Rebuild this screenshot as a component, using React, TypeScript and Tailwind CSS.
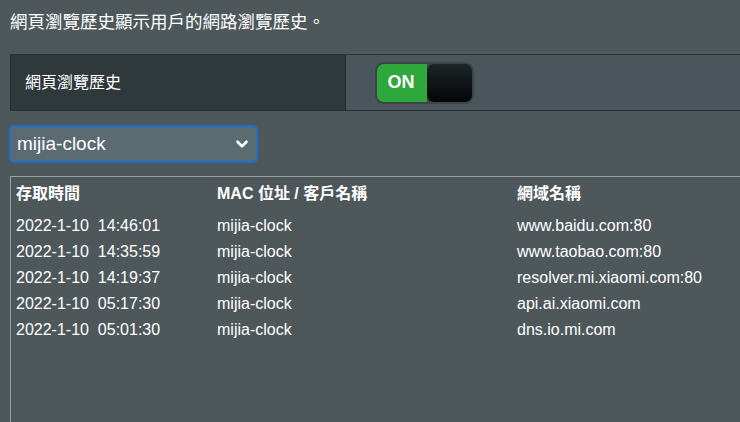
import { ChevronDown } from 'lucide-react'

const rows = [
  { time: '2022-1-10  14:46:01', client: 'mijia-clock', domain: 'www.baidu.com:80' },
  { time: '2022-1-10  14:35:59', client: 'mijia-clock', domain: 'www.taobao.com:80' },
  { time: '2022-1-10  14:19:37', client: 'mijia-clock', domain: 'resolver.mi.xiaomi.com:80' },
  { time: '2022-1-10  05:17:30', client: 'mijia-clock', domain: 'api.ai.xiaomi.com' },
  { time: '2022-1-10  05:01:30', client: 'mijia-clock', domain: 'dns.io.mi.com' },
]

function App() {
  return (
    <div
      className="w-[740px] h-[422px] overflow-hidden bg-[#4e585b] text-white"
      style={{ fontFamily: '"Liberation Sans", Arial, "Noto Sans CJK TC", sans-serif' }}
    >
      {/* Description */}
      <div className="pl-[10px] pt-[10px] h-[54px] text-[17.5px] leading-[24px]">
        網頁瀏覽歷史顯示用戶的網路瀏覽歷史。
      </div>

      {/* Setting row */}
      <div className="ml-[10px] flex h-[57px] border-y border-[#2a3134]">
        <div className="w-[335px] bg-[#2f383b] border-l border-[#262d30] flex items-center pl-[14px] text-[16px]">
          網頁瀏覽歷史
        </div>
        <div className="flex-1 bg-[#4a565b] border-l border-[#262d30] flex items-center pl-[30px]">
          <div className="flex h-[40px] w-[97px] rounded-[8px] bg-[#3a4447] p-[1px] ring-1 ring-[#3d4649]">
            <div className="flex w-[50px] items-center justify-center rounded-l-[7px] bg-[#2ea83b] text-[18px] font-bold pr-[2px]">
              ON
            </div>
            <div className="flex-1 rounded-[7px] bg-gradient-to-b from-[#1d2528] to-[#050708]" />
          </div>
        </div>
      </div>

      {/* Client select */}
      <div className="pl-[9px] pt-[14px] h-[65px]">
        <div className="flex h-[38px] w-[249px] items-center justify-between rounded-[5px] border-2 border-[#1f6fd0] bg-[#5a6b71] pl-[6px] pr-[5px] text-[19px]">
          <span>mijia-clock</span>
          <ChevronDown className="h-[18px] w-[18px]" strokeWidth={3.5} />
        </div>
      </div>

      {/* History table */}
      <div className="ml-[10px] h-[260px] border-l border-t border-[#9aa1a3] pl-[5px] pt-[4px] text-[16px]">
        <div className="mb-[6px] flex h-[26px] items-center font-bold">
          <div className="w-[201px]">存取時間</div>
          <div className="w-[300px]">MAC 位址 / 客戶名稱</div>
          <div>網域名稱</div>
        </div>
        {rows.map((r) => (
          <div key={r.time} className="flex h-[26px] items-center">
            <div className="w-[201px] whitespace-pre">{r.time}</div>
            <div className="w-[300px]">{r.client}</div>
            <div>{r.domain}</div>
          </div>
        ))}
      </div>
    </div>
  )
}

export default App
